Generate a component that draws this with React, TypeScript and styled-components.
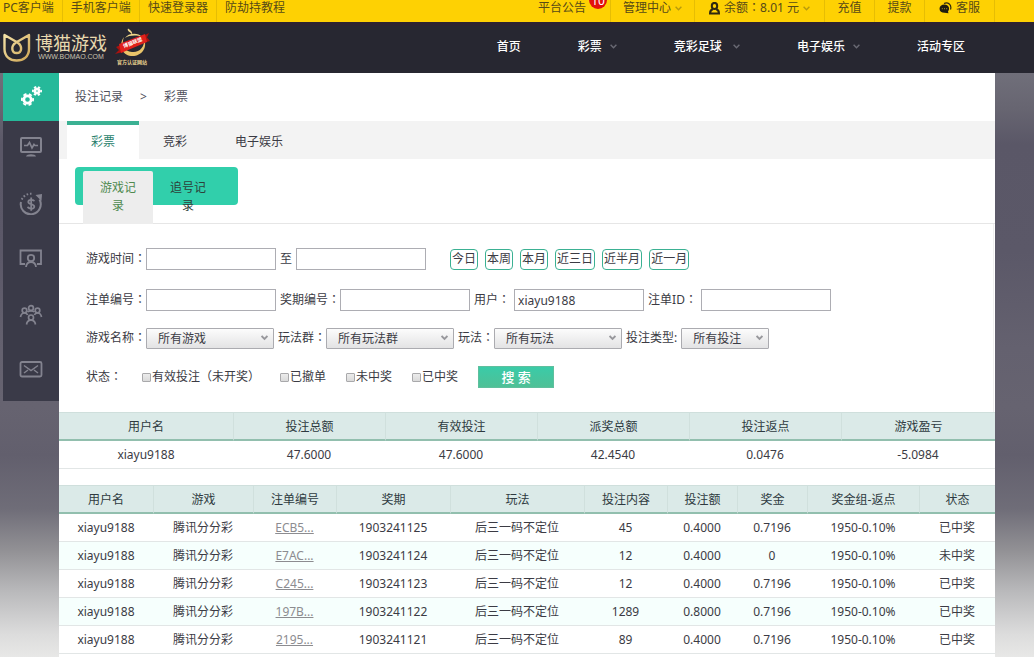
import React from "react";
import styled, { createGlobalStyle } from "styled-components";

const fontStack = `"Noto Sans", "Noto Sans CJK SC", sans-serif`;

const GlobalStyle = createGlobalStyle`
  *, *::before, *::after { box-sizing: border-box; }
  body {
    margin: 0;
    background: #f0f0f0;
    color: #3b3b44;
    font-family: ${fontStack};
    font-size: 12px;
    line-height: 18px;
  }
  a { color: inherit; text-decoration: none; }
  button, input, select { font: inherit; color: inherit; margin: 0; }
`;

const Page = styled.div`
  display: flex;
  flex-direction: column;
  height: 100vh;
  overflow: hidden;
`;

/* full-width colon set in the middle of its square */
const ColonMark = styled.span`
  font-family: "Noto Sans CJK TC", sans-serif;
  line-height: 1;
`;

const Captioned = ({ children }: { children: string }) => (
  <span>
    {children}
    <ColonMark lang="zh-Hant">：</ColonMark>
  </span>
);

/* ---------- top bar ---------- */

const TopBar = styled.div`
  display: flex;
  flex: none;
  justify-content: space-between;
  height: 22px;
  padding: 0 39px 0 3px;
  background: #fed103;
  color: #574a17;
  line-height: 16px;
`;

const TopGroup = styled.div`
  display: flex;
`;

const TopLink = styled.a<{ $width?: number; $last?: boolean }>`
  display: flex;
  justify-content: center;
  align-items: flex-start;
  gap: 4px;
  height: 22px;
  width: ${(p) => (p.$width ? `${p.$width}px` : "auto")};
  padding: 0 ${(p) => (p.$width ? 0 : 8)}px;
  border-right: ${(p) => (p.$last ? "none" : "1px solid #e6bd04")};
  white-space: nowrap;

  &:first-child { padding-left: 0; }
  svg { margin-top: 2px; }
`;

const Notice = styled(TopLink)`
  position: relative;
  padding-right: 24px;
`;

const Badge = styled.span`
  position: absolute;
  top: -9px;
  right: 3px;
  width: 18px;
  height: 18px;
  border-radius: 9px;
  background: #e2100c;
  color: #fff;
  font-size: 12px;
  line-height: 20px;
  text-align: center;
`;

const ChevronSlot = styled.span`
  display: inline-flex;
  align-items: center;
  height: 16px;
  svg { margin: 0; }
`;

const Chevron = ({ color }: { color: string }) => (
  <ChevronSlot>
    <svg width="7" height="5" viewBox="0 0 7 5" fill="none" stroke={color} strokeWidth="1.400">
      <path d="M0.6 0.8 L3.5 3.8 L6.4 0.8" />
    </svg>
  </ChevronSlot>
);

/* ---------- header ---------- */

const Header = styled.header`
  display: flex;
  flex: none;
  justify-content: space-between;
  align-items: center;
  height: 51px;
  padding: 0 69px 6px 2px;
  border-top: 4px solid #2c2331;
  background: #272731;
`;

const Brand = styled.a`
  display: flex;
  align-items: center;
`;

const BrandText = styled.span`
  display: flex;
  flex-direction: column;
  align-items: center;
  margin: 0 8px 0 3px;
  color: #e8d9ae;
`;

const BrandName = styled.span`
  font-size: 18px;
  line-height: 20px;
`;

const BrandUrl = styled.span`
  color: #c9c2b0;
  font-family: "Liberation Sans", sans-serif;
  font-size: 7px;
  line-height: 7px;
`;

const MainNav = styled.nav`
  display: flex;
  gap: 57px;
  color: #fff;
  font-weight: 500;
`;

const NavLink = styled.a`
  display: flex;
  align-items: center;
  gap: 8px;
  white-space: pre;
`;

/* ---------- body ---------- */

const Body = styled.div`
  display: flex;
  flex: 1;
  align-items: stretch;
  padding: 0 39px 0 3px;
  background: linear-gradient(
    180deg,
    #706f7a 0%,
    #676571 6%,
    #5a5767 12%,
    #5b5868 30%,
    #64616f 46%,
    #666370 56%,
    #625f6d 64%,
    #6f6d78 73%,
    #929195 80%,
    #bababc 87%,
    #dcdcdc 94%,
    #eeeeed 100%
  );
`;

const SideBar = styled.nav`
  flex: none;
  align-self: flex-start;
  width: 56px;
  background: #3a3a48;
`;

const SideLink = styled.a<{ $active?: boolean }>`
  display: flex;
  align-items: center;
  justify-content: center;
  height: ${(p) => (p.$active ? 48 : 56)}px;
  padding-bottom: ${(p) => (p.$active ? 2 : 4)}px;
  background: ${(p) => (p.$active ? "#26b99a" : "transparent")};
  color: ${(p) => (p.$active ? "#fff" : "#83838f")};
`;

const Content = styled.main`
  flex: 1;
  min-width: 0;
  background: #fff;
`;

const Crumbs = styled.div`
  display: flex;
  align-items: center;
  gap: 17px;
  height: 48px;
  padding-left: 16px;
  color: #50505c;
`;

const Tabs = styled.div`
  display: flex;
  height: 38px;
  padding-left: 8px;
  background: #f3f3f3;
`;

const Tab = styled.a<{ $active?: boolean }>`
  padding: 8px 24px 0;
  border-top: 4px solid ${(p) => (p.$active ? "#3bb193" : "transparent")};
  background: ${(p) => (p.$active ? "#fff" : "transparent")};
  color: ${(p) => (p.$active ? "#2a7f6c" : "#3b3b44")};
`;

const SubTabArea = styled.div`
  height: 65px;
  padding: 8px 16px 0;
  border-bottom: 1px solid #e6e6e6;
`;

const SubTabs = styled.div`
  display: flex;
  align-items: flex-start;
  width: 163px;
  height: 38px;
  padding: 4px 8px 0;
  border-radius: 4px;
  background: #31cfab;
`;

const SubTab = styled.a<{ $active?: boolean }>`
  width: 70px;
  height: 53px;
  padding: 8px 16px 0;
  border-radius: 2px 2px 0 0;
  background: ${(p) => (p.$active ? "#ededed" : "transparent")};
  color: ${(p) => (p.$active ? "#4f8a4f" : "#2d3f3a")};
  text-align: center;
`;

/* ---------- filters ---------- */

const Filters = styled.form`
  display: grid;
  grid-template-rows: 42px 40px 36px 42px;
  margin-right: 1px;
  padding: 14px 0 14px 27px;
  border-right: 1px solid #f0f0f0;
`;

const FilterRow = styled.div<{ $gap?: number }>`
  display: flex;
  align-items: center;
  gap: ${(p) => p.$gap ?? 4}px;
  white-space: nowrap;
`;

const Field = styled.label<{ $gap?: number }>`
  display: flex;
  align-items: center;
  gap: ${(p) => p.$gap ?? 0}px;
`;

const TextBox = styled.input`
  width: 130px;
  height: 22px;
  padding: 0 3px;
  border: 1px solid #adadb3;
  border-radius: 0;
  background: #fff;
`;

const SelectWrap = styled.span<{ $width: number }>`
  display: grid;
  align-items: center;
  width: ${(p) => p.$width}px;

  > * { grid-area: 1 / 1; }
  svg { justify-self: end; margin-right: 6px; pointer-events: none; }
`;

const Select = styled.select`
  appearance: none;
  width: 100%;
  height: 21px;
  padding: 0 20px 0 11px;
  border: 1px solid #ababb0;
  border-radius: 1px;
  background: linear-gradient(180deg, #fcfcfc, #e3e3e4);
  line-height: 19px;
`;

const QuickDates = styled.div`
  display: flex;
  gap: 7px;
  margin-left: 20px;
`;

const QuickButton = styled.button`
  height: 21px;
  padding: 0 1px;
  border: 1px solid #3bb193;
  border-radius: 4px;
  background: #fff;
  line-height: 18px;
`;

const CheckLabel = styled.label`
  display: flex;
  align-items: center;
  gap: 1px;
`;

const CheckBox = styled.input`
  appearance: none;
  width: 9px;
  height: 9px;
  border: 1px solid #a9a9ab;
  border-radius: 1px;
  background: linear-gradient(180deg, #ececec, #dadada);
`;

const SearchButton = styled.button`
  width: 76px;
  height: 22px;
  padding: 0;
  border: 1px solid #5fbf9d;
  background: linear-gradient(180deg, #3acba8, #4fc096);
  color: #fff;
  font-size: 13px;
  font-weight: 500;
  line-height: 18px;
`;

/* ---------- tables ---------- */

const DataTable = styled.table`
  width: 100%;
  margin-bottom: 16px;
  border-collapse: separate;
  border-spacing: 0;
  table-layout: fixed;
  text-align: center;
`;

const HeadCell = styled.th<{ $width: number }>`
  width: ${(p) => p.$width}px;
  height: 29px;
  padding: 2px 0 0;
  border-top: 1px solid #cfdfdc;
  border-bottom: 2px solid #92bfae;
  background: #dbeae8;
  color: #2e3a40;
  font-weight: 400;

  & + & { border-left: 1px solid #d0e0dd; }
`;

const Row = styled.tr`
  &:nth-child(even) { background: #f6fffd; }
`;

const Cell = styled.td`
  height: 28px;
  padding: 0;
  border-bottom: 1px solid #e2e6e6;
`;

const OrderLink = styled.a`
  color: #8c8c90;
  text-decoration: underline;
`;

/* ---------- drawings ---------- */

const LogoMark = () => (
  <svg width="30" height="32" viewBox="0 0 30 32" fill="none">
    <defs>
      <linearGradient id="gold" x1="0" y1="0" x2="1" y2="1">
        <stop offset="0" stopColor="#f4e2a8" />
        <stop offset="1" stopColor="#cfa655" />
      </linearGradient>
    </defs>
    <path
      d="M2.500 4 V18 C2.500 25.500 8 29.500 14.700 29.500 C21.500 29.500 27 25.500 27 18 V4 L14 11.500 C8.500 15 9.500 22 14.700 22 C20 22 20.800 15 15.500 11.500 L2.500 4 Z"
      stroke="url(#gold)"
      strokeWidth="2.4"
      strokeLinejoin="round"
    />
  </svg>
);

const Certificate = () => (
  <svg width="36" height="38" viewBox="0 0 36 38" fill="none">
    <path d="M13 0.500 C11.500 3.500 16 4 17 6.500 C18 4.500 16 2.500 13 0.500 Z" fill="#f0d78a" />
    <path d="M9 9 C3 17 7 27 16 28 C26 29 33 20 29 11 C30 19 24 25 17 24 C9 23.500 6 16 9 9 Z" fill="#e9c46a" />
    <path d="M10 10 C13 5 23 4 27 9 C22 7 15 7 10 10 Z" fill="#f0d78a" />
    <path d="M1 19 L8 16 L8 24 L0 26 L4 22 Z" fill="#a8120f" />
    <path d="M28 8 L34 5 L32 9.500 L35 13 L28 15 Z" fill="#a8120f" />
    <path d="M4 16 L30 6 L32 14 L6 25 Z" fill="#e0201b" />
    <text x="9" y="20" fontSize="5" fontWeight="700" fill="#fff" transform="rotate(-22 9 20)">
      博猫联盟
    </text>
    <text x="17" y="36" fontSize="5" fontWeight="700" fill="#ecd491" textAnchor="middle">
      官方认证网站
    </text>
  </svg>
);

const Gear = ({ x, y, r }: { x: number; y: number; r: number }) => (
  <g transform={`translate(${x} ${y})`} fill="none" stroke="currentColor">
    <circle r={r - 2.8} strokeWidth="2.8" />
    <circle r={r - 0.9} strokeWidth="1.8" pathLength="12" strokeDasharray="1.1 0.9" strokeDashoffset="0.5" />
  </g>
);

const GearsIcon = () => (
  <svg width="24" height="24" viewBox="0 0 24 24">
    <Gear x={8.5} y={15.5} r={6.5} />
    <Gear x={18} y={7} r={5} />
  </svg>
);

const MonitorIcon = () => (
  <svg width="24" height="24" viewBox="0 0 24 24" fill="none" stroke="currentColor" strokeWidth="2">
    <rect x="2" y="3" width="20" height="14" rx="1" />
    <path d="M5 10.500 H8.500 L10.500 7.500 L13 13 L15 9.500 L16 10.500 H19" strokeWidth="1.700" />
    <path d="M7 21.500 C7.500 18.500 16.500 18.500 17 21.500 Z" fill="currentColor" stroke="none" />
  </svg>
);

const MoneyIcon = () => (
  <svg width="24" height="24" viewBox="0 0 24 24" fill="none" stroke="currentColor" strokeWidth="2">
    <path d="M2 11 A10 10 0 1 0 20.500 8.500" />
    <path d="M16.500 4 L23 3 L22.500 10 Z" fill="currentColor" stroke="none" />
    <path d="M2.800 8.500 A10 10 0 0 1 12.500 2.800" strokeDasharray="1.600 1.800" />
    <path d="M15.300 10.300 C14.800 8.400 9.300 8.200 9.300 11 C9.300 13.600 15.300 12.800 15.300 15.700 C15.300 18.500 9.300 18 8.800 15.800 M12.200 6.500 V19.800" strokeWidth="1.800" />
  </svg>
);

const PresenterIcon = () => (
  <svg width="24" height="24" viewBox="0 0 24 24" fill="none" stroke="currentColor" strokeWidth="1.800">
    <path d="M6 17 H1.500 V3.500 H22 V17 H18" />
    <circle cx="12" cy="11" r="3.200" />
    <path d="M7 20 C7.500 16.300 9.500 15 12 15 C14.500 15 16.500 16.300 17 20" />
  </svg>
);

const TeamIcon = () => (
  <svg width="24" height="24" viewBox="0 0 24 24" fill="none" stroke="currentColor" strokeWidth="1.700">
    <circle cx="12" cy="5" r="2.400" />
    <circle cx="5.500" cy="7.500" r="2.300" />
    <circle cx="18.500" cy="7.500" r="2.300" />
    <circle cx="12" cy="14.500" r="2.500" />
    <path d="M1.500 14 C2 11 3.500 10 5.500 10 C7 10 8 10.500 8.700 12 M22.500 14 C22 11 20.500 10 18.500 10 C17 10 16 10.500 15.300 12 M8.500 9 C9.500 7.500 14.500 7.500 15.500 9 M7.500 21.500 C8 18.500 9.500 17.200 12 17.200 C14.500 17.200 16 18.500 16.500 21.500" />
  </svg>
);

const MailIcon = () => (
  <svg width="24" height="24" viewBox="0 0 24 24" fill="none" stroke="currentColor" strokeWidth="1.800">
    <rect x="1.500" y="3" width="21" height="14.500" rx="1.500" />
    <path d="M5 6.500 L12 11.500 L19 6.500 M5 14 L9 11 M19 14 L15 11" strokeWidth="1.500" />
  </svg>
);

const UserIcon = () => (
  <svg width="11" height="13" viewBox="0 0 11 13" fill="none" stroke="#2f2910" strokeWidth="2">
    <ellipse cx="5.500" cy="3.900" rx="2.700" ry="3" />
    <path d="M3.800 7 C1.500 8 1 9.300 1 11.500 H10 C10 9.300 9.500 8 7.200 7" />
  </svg>
);

const ChatIcon = () => (
  <svg width="13" height="12" viewBox="0 0 13 12" fill="none">
    <path d="M5 1.500 C9 -0.500 13 3 11.500 7.500" stroke="#2f2910" strokeWidth="1.200" />
    <path d="M5.500 2.500 C2.500 2.500 0.500 4.300 0.500 6.700 C0.500 9.200 2.500 10.800 5.500 10.800 L9.500 11.300 L9 9.500 C11.500 6.500 9.500 2.500 5.500 2.500 Z" fill="#1f1c10" />
    <path d="M2.800 6.700 h1 M5 6.700 h1 M7.200 6.700 h1" stroke="#b39a20" strokeWidth="1" />
  </svg>
);

const SelectArrow = () => (
  <svg width="7" height="6" viewBox="0 0 7 6" fill="none" stroke="#98989c" strokeWidth="1.800">
    <path d="M0.600 1 L3.500 4 L6.400 1" />
  </svg>
);

/* ---------- data ---------- */

const summaryColumns: [string, number][] = [
  ["用户名", 174],
  ["投注总额", 152],
  ["有效投注", 152],
  ["派奖总额", 152],
  ["投注返点", 152],
  ["游戏盈亏", 154],
];
const summaryRow = ["xiayu9188", "47.6000", "47.6000", "42.4540", "0.0476", "-5.0984"];

const betColumns: [string, number][] = [
  ["用户名", 94],
  ["游戏", 100],
  ["注单编号", 83],
  ["奖期", 114],
  ["玩法", 134],
  ["投注内容", 83],
  ["投注额", 70],
  ["奖金", 70],
  ["奖金组-返点", 112],
  ["状态", 76],
];

const bets = [
  { id: "ECB5...", issue: "1903241125", content: "45", amount: "0.4000", prize: "0.7196", status: "已中奖" },
  { id: "E7AC...", issue: "1903241124", content: "12", amount: "0.4000", prize: "0", status: "未中奖" },
  { id: "C245...", issue: "1903241123", content: "12", amount: "0.4000", prize: "0.7196", status: "已中奖" },
  { id: "197B...", issue: "1903241122", content: "1289", amount: "0.8000", prize: "0.7196", status: "已中奖" },
  { id: "2195...", issue: "1903241121", content: "89", amount: "0.4000", prize: "0.7196", status: "已中奖" },
];

type PickerProps = { label: React.ReactNode; value: string; width: number; gap?: number };

const Picker = ({ label, value, width, gap }: PickerProps) => (
  <Field $gap={gap}>
    {label}
    <SelectWrap $width={width}>
      <Select defaultValue={value}>
        <option>{value}</option>
      </Select>
      <SelectArrow />
    </SelectWrap>
  </Field>
);

export default function App() {
  return (
    <Page>
      <GlobalStyle />
      <TopBar>
        <TopGroup>
          <TopLink href="#">PC客户端</TopLink>
          <TopLink href="#">手机客户端</TopLink>
          <TopLink href="#">快速登录器</TopLink>
          <TopLink href="#" $last>防劫持教程</TopLink>
        </TopGroup>
        <TopGroup>
          <Notice href="#">
            平台公告<Badge>10</Badge>
          </Notice>
          <TopLink href="#" $width={84}>
            管理中心<Chevron color="#b89a0c" />
          </TopLink>
          <TopLink href="#" $width={130}>
            <UserIcon />
            <span><Captioned>余额</Captioned>8.01 元</span>
            <Chevron color="#b89a0c" />
          </TopLink>
          <TopLink href="#" $width={50}>充值</TopLink>
          <TopLink href="#" $width={50}>提款</TopLink>
          <TopLink href="#" $width={70}>
            <ChatIcon />客服
          </TopLink>
        </TopGroup>
      </TopBar>

      <Header>
        <Brand href="#">
          <LogoMark />
          <BrandText>
            <BrandName>博猫游戏</BrandName>
            <BrandUrl>WWW.BOMAO.COM</BrandUrl>
          </BrandText>
          <Certificate />
        </Brand>
        <MainNav>
          <NavLink href="#">首页</NavLink>
          <NavLink href="#">彩票<Chevron color="#6a6a74" /></NavLink>
          <NavLink href="#">{"竞彩足球 "}<Chevron color="#6a6a74" /></NavLink>
          <NavLink href="#">电子娱乐<Chevron color="#6a6a74" /></NavLink>
          <NavLink href="#">活动专区</NavLink>
        </MainNav>
      </Header>

      <Body>
        <SideBar>
          <SideLink href="#" $active aria-label="设置"><GearsIcon /></SideLink>
          <SideLink href="#" aria-label="监控"><MonitorIcon /></SideLink>
          <SideLink href="#" aria-label="资金"><MoneyIcon /></SideLink>
          <SideLink href="#" aria-label="代理"><PresenterIcon /></SideLink>
          <SideLink href="#" aria-label="团队"><TeamIcon /></SideLink>
          <SideLink href="#" aria-label="消息"><MailIcon /></SideLink>
        </SideBar>

        <Content>
          <Crumbs>
            <a href="#">投注记录</a>
            <span>&gt;</span>
            <span>彩票</span>
          </Crumbs>
          <Tabs>
            <Tab href="#" $active>彩票</Tab>
            <Tab href="#">竞彩</Tab>
            <Tab href="#">电子娱乐</Tab>
          </Tabs>
          <SubTabArea>
            <SubTabs>
              <SubTab href="#" $active>游戏记录</SubTab>
              <SubTab href="#">追号记录</SubTab>
            </SubTabs>
          </SubTabArea>

          <Filters onSubmit={(e) => e.preventDefault()}>
            <FilterRow>
              <Field><Captioned>游戏时间</Captioned><TextBox type="text" /></Field>
              <Field $gap={4}>至<TextBox type="text" /></Field>
              <QuickDates>
                {["今日", "本周", "本月", "近三日", "近半月", "近一月"].map((t) => (
                  <QuickButton type="button" key={t}>{t}</QuickButton>
                ))}
              </QuickDates>
            </FilterRow>
            <FilterRow>
              <Field><Captioned>注单编号</Captioned><TextBox type="text" /></Field>
              <Field><Captioned>奖期编号</Captioned><TextBox type="text" /></Field>
              <Field $gap={4}><Captioned>用户</Captioned><TextBox type="text" defaultValue="xiayu9188" /></Field>
              <Field $gap={4}><Captioned>注单ID</Captioned><TextBox type="text" /></Field>
            </FilterRow>
            <FilterRow>
              <Picker label={<Captioned>游戏名称</Captioned>} value="所有游戏" width={128} />
              <Picker label={<Captioned>玩法群</Captioned>} value="所有玩法群" width={128} />
              <Picker label={<Captioned>玩法</Captioned>} value="所有玩法" width={128} />
              <Picker label="投注类型:" value="所有投注" width={88} gap={4} />
            </FilterRow>
            <FilterRow $gap={20}>
              <Captioned>状态</Captioned>
              {["有效投注（未开奖）", "已撤单", "未中奖", "已中奖"].map((t) => (
                <CheckLabel key={t}>
                  <CheckBox type="checkbox" />
                  {t}
                </CheckLabel>
              ))}
              <SearchButton type="submit">搜 索</SearchButton>
            </FilterRow>
          </Filters>

          <DataTable>
            <thead>
              <tr>
                {summaryColumns.map(([name, width]) => (
                  <HeadCell key={name} $width={width}>{name}</HeadCell>
                ))}
              </tr>
            </thead>
            <tbody>
              <Row>
                {summaryRow.map((value, i) => (
                  <Cell key={i}>{value}</Cell>
                ))}
              </Row>
            </tbody>
          </DataTable>

          <DataTable>
            <thead>
              <tr>
                {betColumns.map(([name, width]) => (
                  <HeadCell key={name} $width={width}>{name}</HeadCell>
                ))}
              </tr>
            </thead>
            <tbody>
              {bets.map((bet) => (
                <Row key={bet.id}>
                  <Cell>xiayu9188</Cell>
                  <Cell>腾讯分分彩</Cell>
                  <Cell><OrderLink href="#">{bet.id}</OrderLink></Cell>
                  <Cell>{bet.issue}</Cell>
                  <Cell>后三一码不定位</Cell>
                  <Cell>{bet.content}</Cell>
                  <Cell>{bet.amount}</Cell>
                  <Cell>{bet.prize}</Cell>
                  <Cell>1950-0.10%</Cell>
                  <Cell>{bet.status}</Cell>
                </Row>
              ))}
            </tbody>
          </DataTable>
        </Content>
      </Body>
    </Page>
  );
}
